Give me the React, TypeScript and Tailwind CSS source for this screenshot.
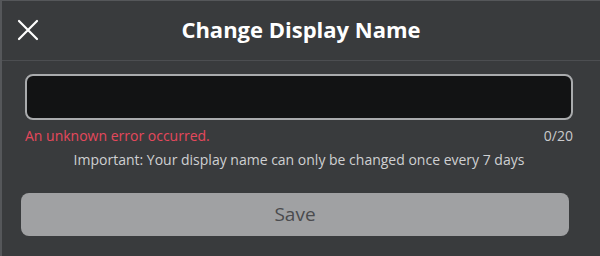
import React from 'react';

const XIcon = () => (
  <svg width="22" height="22" viewBox="0 0 22 22" fill="none" stroke="white" strokeWidth="2.2" strokeLinecap="round">
    <path d="M2 2L20 20M20 2L2 20" />
  </svg>
);

export default function App() {
  return (
    <div
      className="w-[600px] h-[256px] bg-[#393b3d] border-l-2 border-t border-[#55575a] flex flex-col overflow-hidden"
      style={{ fontFamily: '"Open Sans", "Liberation Sans", Arial, sans-serif' }}
    >
      <div className="relative h-[60px] flex items-center justify-center border-b border-[#4c4e51] shrink-0">
        <button className="absolute left-[15px] top-[18px]">
          <XIcon />
        </button>
        <h1 className="text-white font-bold text-[22px] mt-[-2px]">Change Display Name</h1>
      </div>

      <div className="flex flex-col pl-[23px] pr-[27px] pt-[13px]">
        <div className="h-[46px] rounded-[8px] border-2 border-[#a9abad] bg-[#121314]" />
        <div className="flex justify-between mt-[7px] text-[14px] leading-[18px]">
          <span className="text-[#e5485c]">An unknown error occurred.</span>
          <span className="text-[#c9cacc]">0/20</span>
        </div>
        <p className="text-center text-[#cfd0d2] text-[14px] leading-[18px] mt-[6px]">
          Important: Your display name can only be changed once every 7 days
        </p>
      </div>

      <div className="px-[19px] pt-[24px]">
        <button className="w-[548px] h-[43px] rounded-[8px] bg-[#a0a1a3] text-[#4a4b4e] text-[19px] font-medium flex items-center justify-center">
          Save
        </button>
      </div>
    </div>
  );
}
